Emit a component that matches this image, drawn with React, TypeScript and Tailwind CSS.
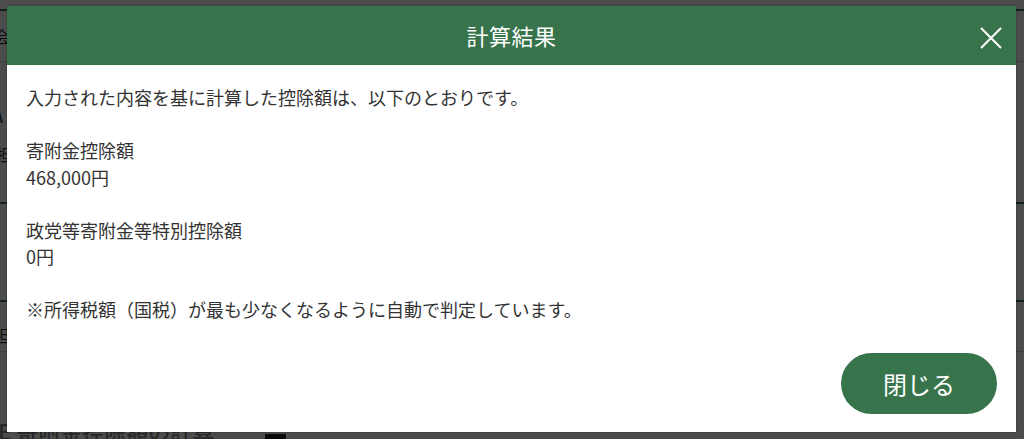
import React from "react";

const font = { fontFamily: '"Noto Sans CJK JP", "Noto Sans", sans-serif' };

function BackgroundPage() {
  return (
    <div className="w-[1024px] h-[439px] bg-white overflow-hidden text-[#333]" style={font}>
      <div className="h-[9px]" />
      <div className="h-[53px] border-t-2 border-[#38744b] border-b border-b-[#cccccc] flex items-center text-[16px] -ml-[6px]">
        会
      </div>
      <div className="h-[140px] flex flex-col justify-center gap-4 -ml-[4px]">
        <div className="text-[18px] font-bold">\</div>
        <div className="text-[16px]">担</div>
      </div>
      <div className="h-[98px] border-t-2 border-[#38744b]" />
      <div className="h-[52px] border-t-2 border-[#38744b] border-b border-b-[#cccccc] flex items-end pb-1 -ml-[6px] text-[16px]">
        担
      </div>
      <div className="h-[87px] flex items-start pt-[62px] -ml-[2px]">
        <span className="w-[260px] text-[22px] font-medium text-[#888]">E 寄附金控除額の計算</span>
        <span className="ml-[7px] mt-[20px] w-[21px] h-[8px] bg-[#222]" />
      </div>
    </div>
  );
}

function ResultModal() {
  return (
    <div
      className="absolute left-[7px] top-[6px] w-[1009px] h-[426px] bg-white flex flex-col shadow-[0_0_2px_rgba(0,0,0,0.3)]"
      style={font}
    >
      <div className="relative h-[59px] bg-[#38744b] flex items-center justify-center shrink-0">
        <h2 className="text-white text-[22px] tracking-[0.02em]">計算結果</h2>
        <button className="absolute right-[14px] top-[21px] w-[22px] h-[22px] flex items-center justify-center">
          <svg width="22" height="22" viewBox="0 0 22 22" fill="none" stroke="white" strokeWidth="2">
            <path d="M1 1L21 21M21 1L1 21" />
          </svg>
        </button>
      </div>

      <div className="flex-1 px-[19px] pt-[19px] text-[18px] leading-[26.5px] text-[#333]">
        <p>入力された内容を基に計算した控除額は、以下のとおりです。</p>
        <p className="mt-[26.5px]">寄附金控除額</p>
        <p>468,000円</p>
        <p className="mt-[26.5px]">政党等寄附金等特別控除額</p>
        <p>0円</p>
        <p className="mt-[26.5px]">※所得税額（国税）が最も少なくなるように自動で判定しています。</p>
      </div>

      <div className="flex justify-end pr-[19px] pb-[18px]">
        <button className="w-[156px] h-[61px] rounded-full bg-[#38744b] text-white text-[24px]">
          閉じる
        </button>
      </div>
    </div>
  );
}

export default function App() {
  return (
    <div className="relative w-[1024px] h-[439px] overflow-hidden">
      <BackgroundPage />
      <div className="absolute inset-0 bg-black/70" />
      <ResultModal />
    </div>
  );
}
